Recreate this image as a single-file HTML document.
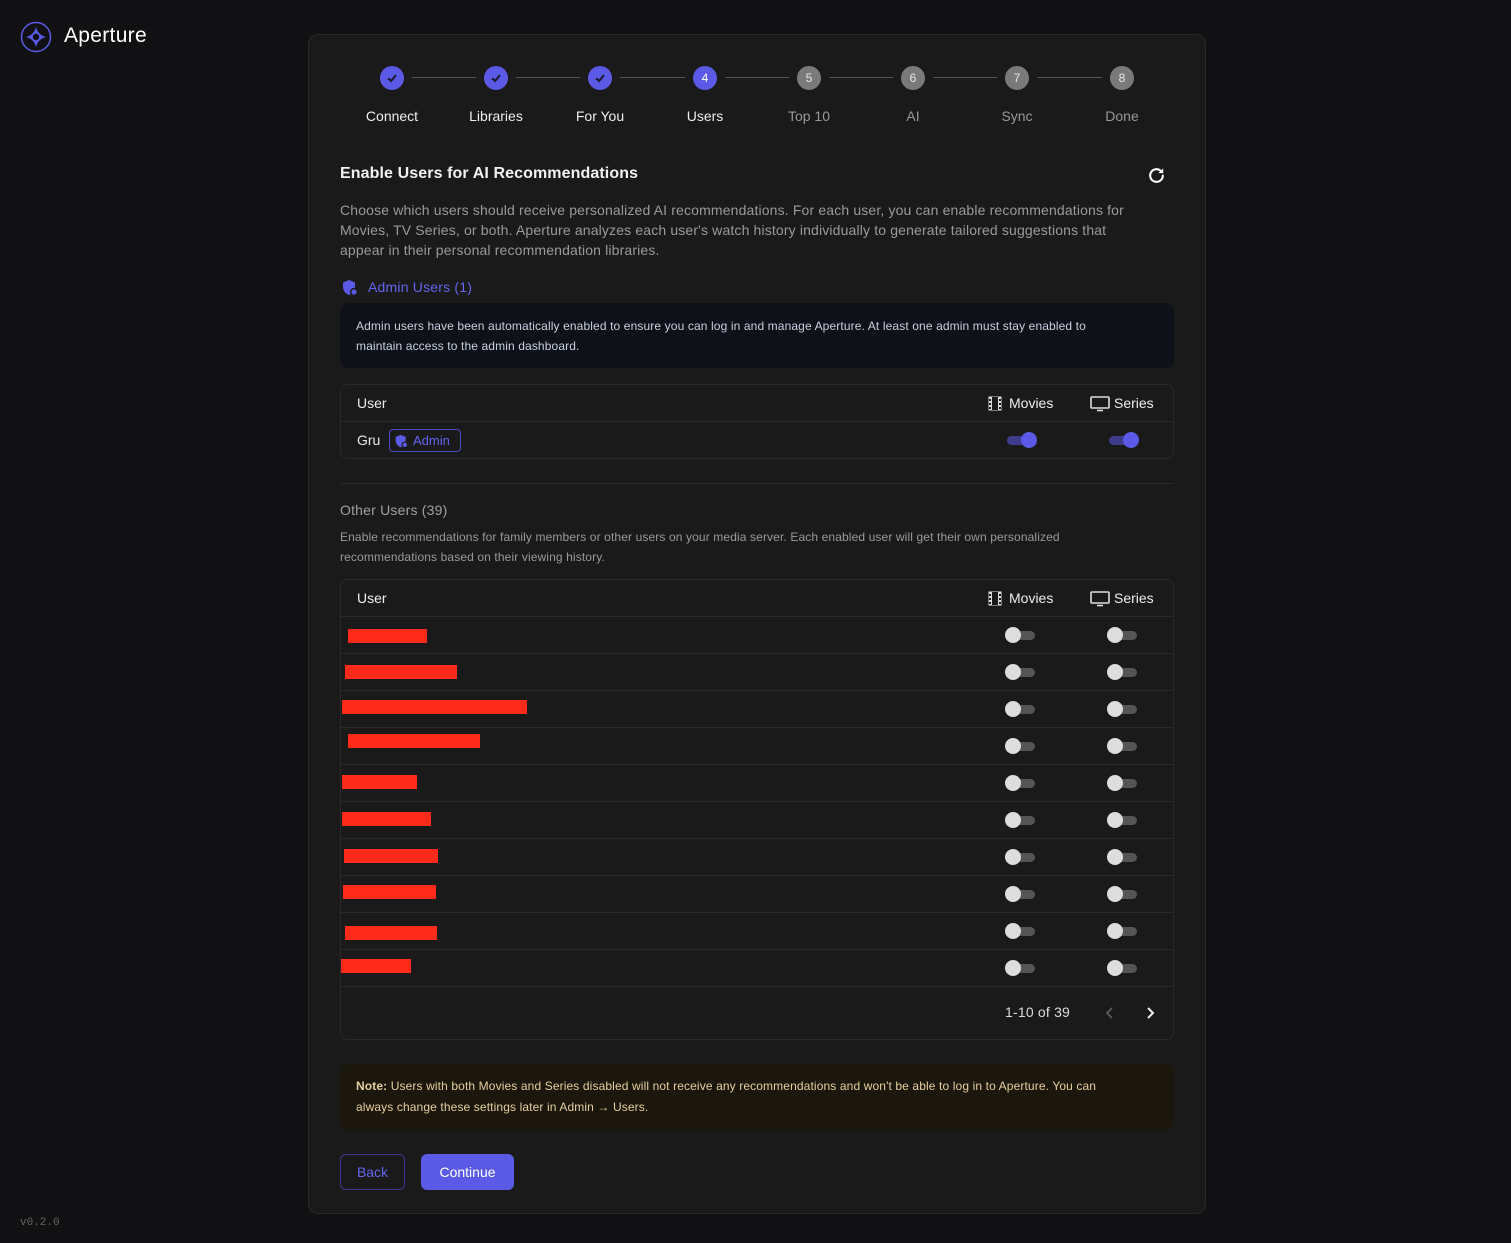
<!DOCTYPE html>
<html><head><meta charset="utf-8"><style>
*{box-sizing:border-box;margin:0;padding:0}
body{width:1511px;height:1243px;background:#111114;font-family:"Liberation Sans",sans-serif;color:#e8e8e8;position:relative;overflow:hidden}
.a{position:absolute}
.card{left:308px;top:34px;width:898px;height:1180px;background:#1a1a1a;border:1px solid #2a2a2a;border-radius:10px}
.c{width:24px;height:24px;border-radius:50%;top:66px;display:flex;align-items:center;justify-content:center;font-size:12px}
.done{background:#5a5ae6}.cur{background:#5a5ae6;color:#fff}.fut{background:#7a7a7a;color:#e8e8e8}
.ln{top:77px;height:1px;background:#555}
.lb{top:108px;font-size:14px;width:110px;text-align:center}
.tbl{left:340px;width:834px;border:1px solid #2a2a2a;border-radius:8px}
.row{position:absolute;left:0;right:0;height:37px;border-top:1px solid #2a2a2a}
.th{font-size:14px;color:#eee}
.tg{width:29px;height:9px;border-radius:5px;background:#555}
.tg::after{content:"";position:absolute;left:-1px;top:-4px;width:16px;height:16px;border-radius:50%;background:#ddd}
.on{background:#3d3d8c}.on::after{left:14px;background:#5a5ae6}
.red{background:#ff2a1a;height:14px}
</style></head><body>
<svg class="a" style="left:20px;top:21px" width="32" height="32" viewBox="0 0 32 32"><circle cx="16" cy="16" r="14.5" fill="none" stroke="#5a5ae6" stroke-width="1.5"/><path d="M16 6 Q18 14 26 16 Q18 18 16 26 Q14 18 6 16 Q14 14 16 6Z" fill="#5a5ae6"/><circle cx="16" cy="16" r="3.2" fill="#111114"/></svg>
<div class="a" style="left:64px;top:24px;font-size:21px;color:#fff;letter-spacing:0.3px">Aperture</div>
<div class="a" style="left:20px;top:1217px;font-family:'Liberation Mono',monospace;font-size:11px;color:#666">v0.2.0</div>

<div class="a card"></div>

<div class="a c done" style="left:380px"><svg width="14" height="14" viewBox="0 0 14 14"><path d="M3 7.2 6 10 11 4.2" fill="none" stroke="#1a1a2a" stroke-width="2"/></svg></div>
<div class="a c done" style="left:484px"><svg width="14" height="14" viewBox="0 0 14 14"><path d="M3 7.2 6 10 11 4.2" fill="none" stroke="#1a1a2a" stroke-width="2"/></svg></div>
<div class="a c done" style="left:588px"><svg width="14" height="14" viewBox="0 0 14 14"><path d="M3 7.2 6 10 11 4.2" fill="none" stroke="#1a1a2a" stroke-width="2"/></svg></div>
<div class="a c cur" style="left:693px">4</div>
<div class="a c fut" style="left:797px">5</div>
<div class="a c fut" style="left:901px">6</div>
<div class="a c fut" style="left:1005px">7</div>
<div class="a c fut" style="left:1110px">8</div>
<div class="a ln" style="left:412px;width:64px"></div>
<div class="a ln" style="left:516px;width:64px"></div>
<div class="a ln" style="left:620px;width:65px"></div>
<div class="a ln" style="left:725px;width:64px"></div>
<div class="a ln" style="left:829px;width:64px"></div>
<div class="a ln" style="left:933px;width:64px"></div>
<div class="a ln" style="left:1037px;width:65px"></div>
<div class="a lb" style="left:337px;color:#eee">Connect</div>
<div class="a lb" style="left:441px;color:#eee">Libraries</div>
<div class="a lb" style="left:545px;color:#eee">For You</div>
<div class="a lb" style="left:650px;color:#eee">Users</div>
<div class="a lb" style="left:754px;color:#999">Top 10</div>
<div class="a lb" style="left:858px;color:#999">AI</div>
<div class="a lb" style="left:962px;color:#999">Sync</div>
<div class="a lb" style="left:1067px;color:#999">Done</div>

<div class="a" style="left:340px;top:165px;font-size:16px;font-weight:bold;color:#f2f2f2;letter-spacing:0.1px">Enable Users for AI Recommendations</div>
<svg class="a" style="left:1147px;top:166px" width="19" height="19" viewBox="0 0 24 24"><path d="M20 12a8 8 0 1 1-2.4-5.7" fill="none" stroke="#fff" stroke-width="2.6" stroke-linecap="round"/><path d="M20.5 3v6h-6z" fill="#fff"/></svg>
<div class="a" style="left:340px;top:200px;width:810px;font-size:14px;line-height:20px;color:#9a9a9a;letter-spacing:0.15px">Choose which users should receive personalized AI recommendations. For each user, you can enable recommendations for Movies, TV Series, or both. Aperture analyzes each user's watch history individually to generate tailored suggestions that appear in their personal recommendation libraries.</div>

<svg class="a" style="left:341px;top:279px" width="18" height="18" viewBox="0 0 18 18"><path d="M8 1 14 3.5V8c0 4-3 7-6 8-3-1-6-4-6-8V3.5Z" fill="#5a5ae6"/><circle cx="13" cy="13" r="4" fill="#1a1a1a"/><circle cx="13" cy="13" r="2.6" fill="#5a5ae6"/></svg>
<div class="a" style="left:368px;top:279px;font-size:14px;color:#6464ee;letter-spacing:0.2px">Admin Users (1)</div>
<div class="a" style="left:340px;top:303px;width:834px;height:65px;background:#0e1118;border-radius:8px;padding:13px 50px 0 16px;font-size:12px;line-height:20px;color:#c8d0e0;letter-spacing:0.12px">Admin users have been automatically enabled to ensure you can log in and manage Aperture. At least one admin must stay enabled to maintain access to the admin dashboard.</div>

<div class="a tbl" style="top:384px;height:75px">
 <div class="a th" style="left:16px;top:10px">User</div>
 <svg class="a" style="left:647px;top:11px" width="14" height="15" viewBox="0 0 14 15"><rect x="0.5" y="0.5" width="13" height="14" fill="#ddd"/><rect x="4" y="1" width="6" height="13" fill="#1a1a1a"/><g fill="#1a1a1a"><rect x="1" y="3" width="2" height="2"/><rect x="1" y="7" width="2" height="2"/><rect x="1" y="11" width="2" height="2"/><rect x="11" y="3" width="2" height="2"/><rect x="11" y="7" width="2" height="2"/><rect x="11" y="11" width="2" height="2"/></g></svg>
 <div class="a th" style="left:668px;top:10px">Movies</div>
 <svg class="a" style="left:749px;top:11px" width="20" height="16" viewBox="0 0 20 16"><rect x="1" y="1" width="18" height="11" rx="1" fill="none" stroke="#ddd" stroke-width="1.6"/><path d="M7 14.5h6" stroke="#ddd" stroke-width="1.6"/></svg>
 <div class="a th" style="left:773px;top:10px">Series</div>
 <div class="row" style="top:36px">
  <div class="a" style="left:16px;top:10px;font-size:14px">Gru</div>
  <div class="a" style="left:48px;top:7px;width:72px;height:23px;border:1px solid #4848c0;border-radius:4px;color:#6464ee;font-size:13px;padding:3px 0 0 23px">Admin<svg class="a" style="left:4px;top:4px" width="15" height="15" viewBox="0 0 18 18"><path d="M8 1 14 3.5V8c0 4-3 7-6 8-3-1-6-4-6-8V3.5Z" fill="#5a5ae6"/><circle cx="13" cy="13" r="4" fill="#1a1a1a"/><circle cx="13" cy="13" r="2.6" fill="#5a5ae6"/></svg></div>
  <div class="a tg on" style="left:666px;top:14px"></div>
  <div class="a tg on" style="left:768px;top:14px"></div>
 </div>
</div>

<div class="a" style="left:340px;top:483px;width:834px;height:1px;background:#2a2a2a"></div>
<div class="a" style="left:340px;top:502px;font-size:14px;color:#a0a0a0;letter-spacing:0.2px">Other Users (39)</div>
<div class="a" style="left:340px;top:527px;width:800px;font-size:12px;line-height:20px;color:#9a9a9a;letter-spacing:0.12px">Enable recommendations for family members or other users on your media server. Each enabled user will get their own personalized recommendations based on their viewing history.</div>

<div class="a tbl" style="top:579px;height:461px">
 <div class="a th" style="left:16px;top:10px">User</div>
 <svg class="a" style="left:647px;top:11px" width="14" height="15" viewBox="0 0 14 15"><rect x="0.5" y="0.5" width="13" height="14" fill="#ddd"/><rect x="4" y="1" width="6" height="13" fill="#1a1a1a"/><g fill="#1a1a1a"><rect x="1" y="3" width="2" height="2"/><rect x="1" y="7" width="2" height="2"/><rect x="1" y="11" width="2" height="2"/><rect x="11" y="3" width="2" height="2"/><rect x="11" y="7" width="2" height="2"/><rect x="11" y="11" width="2" height="2"/></g></svg>
 <div class="a th" style="left:668px;top:10px">Movies</div>
 <svg class="a" style="left:749px;top:11px" width="20" height="16" viewBox="0 0 20 16"><rect x="1" y="1" width="18" height="11" rx="1" fill="none" stroke="#ddd" stroke-width="1.6"/><path d="M7 14.5h6" stroke="#ddd" stroke-width="1.6"/></svg>
 <div class="a th" style="left:773px;top:10px">Series</div>
 <div class="row" style="top:36px"><div class="a tg" style="left:665px;top:14px"></div><div class="a tg" style="left:767px;top:14px"></div></div>
 <div class="row" style="top:73px"><div class="a tg" style="left:665px;top:14px"></div><div class="a tg" style="left:767px;top:14px"></div></div>
 <div class="row" style="top:110px"><div class="a tg" style="left:665px;top:14px"></div><div class="a tg" style="left:767px;top:14px"></div></div>
 <div class="row" style="top:147px"><div class="a tg" style="left:665px;top:14px"></div><div class="a tg" style="left:767px;top:14px"></div></div>
 <div class="row" style="top:184px"><div class="a tg" style="left:665px;top:14px"></div><div class="a tg" style="left:767px;top:14px"></div></div>
 <div class="row" style="top:221px"><div class="a tg" style="left:665px;top:14px"></div><div class="a tg" style="left:767px;top:14px"></div></div>
 <div class="row" style="top:258px"><div class="a tg" style="left:665px;top:14px"></div><div class="a tg" style="left:767px;top:14px"></div></div>
 <div class="row" style="top:295px"><div class="a tg" style="left:665px;top:14px"></div><div class="a tg" style="left:767px;top:14px"></div></div>
 <div class="row" style="top:332px"><div class="a tg" style="left:665px;top:14px"></div><div class="a tg" style="left:767px;top:14px"></div></div>
 <div class="row" style="top:369px"><div class="a tg" style="left:665px;top:14px"></div><div class="a tg" style="left:767px;top:14px"></div></div>
 <div class="row" style="top:406px;height:54px">
  <div class="a" style="left:664px;top:17px;font-size:14px;color:#ddd;letter-spacing:0.2px">1-10 of 39</div>
  <svg class="a" style="left:763px;top:19px" width="12" height="14" viewBox="0 0 12 14"><path d="M8 2 3 7l5 5" fill="none" stroke="#555" stroke-width="2"/></svg>
  <svg class="a" style="left:803px;top:19px" width="12" height="14" viewBox="0 0 12 14"><path d="M4 2l5 5-5 5" fill="none" stroke="#eee" stroke-width="2"/></svg>
 </div>
</div>

<div class="a red" style="left:348px;top:629px;width:79px"></div>
<div class="a red" style="left:345px;top:665px;width:112px"></div>
<div class="a red" style="left:342px;top:700px;width:185px"></div>
<div class="a red" style="left:348px;top:734px;width:132px"></div>
<div class="a red" style="left:342px;top:775px;width:75px"></div>
<div class="a red" style="left:342px;top:812px;width:89px"></div>
<div class="a red" style="left:344px;top:849px;width:94px"></div>
<div class="a red" style="left:343px;top:885px;width:93px"></div>
<div class="a red" style="left:345px;top:926px;width:92px"></div>
<div class="a red" style="left:341px;top:959px;width:70px"></div>

<div class="a" style="left:340px;top:1064px;width:834px;height:66px;background:#1c170c;border-radius:8px;padding:12px 40px 0 16px;font-size:12px;line-height:21px;color:#e6cf9e;letter-spacing:0.12px"><b>Note:</b> Users with both Movies and Series disabled will not receive any recommendations and won't be able to log in to Aperture. You can always change these settings later in Admin → Users.</div>

<div class="a" style="left:340px;top:1154px;width:65px;height:36px;border:1px solid #3a3a90;border-radius:6px;color:#6464ee;font-size:14px;text-align:center;line-height:34px">Back</div>
<div class="a" style="left:421px;top:1154px;width:93px;height:36px;background:#5a5ae6;border-radius:6px;color:#fff;font-size:14px;text-align:center;line-height:36px">Continue</div>
</body></html>
